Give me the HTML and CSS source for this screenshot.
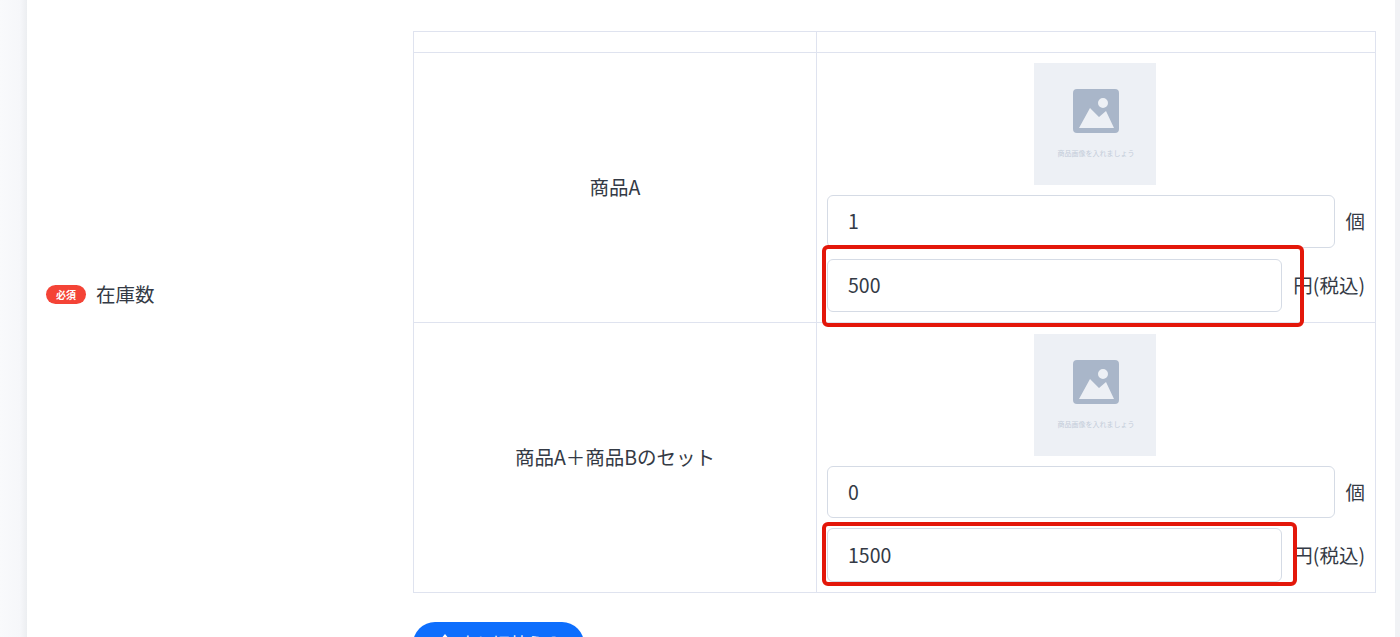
FILE: index.html
```html
<!DOCTYPE html>
<html lang="ja">
<head>
    <meta charset="UTF-8">
    <title>在庫数</title>
    <link rel="stylesheet" href="styles.css">
</head>
<body>
    <div class="card">
        <div class="form-row">
            <div class="form-label">
                <span class="badge">必須</span>
                <span>在庫数</span>
            </div>
            <div class="form-body">
                <table class="stock-table">
                    <tr class="head-row">
                        <td class="name-cell"></td>
                        <td></td>
                    </tr>
                    <tr>
                        <td class="name-cell">商品A</td>
                        <td class="input-cell">
                            <div class="thumb">
                                <svg class="thumb-icon" viewBox="0 0 46 44">
                                    <path fill="#a9b6c9" fill-rule="evenodd" d="M4 0h38a4 4 0 0 1 4 4v36a4 4 0 0 1-4 4H4a4 4 0 0 1-4-4V4a4 4 0 0 1 4-4zM25 14a5 5 0 1 0 10 0a5 5 0 1 0-10 0zM6 39h35l-8-17-7 6-9-9z"/>
                                </svg>
                                <span class="thumb-text">商品画像を入れましょう</span>
                            </div>
                            <div class="input-row">
                                <div class="input-box">1</div>
                                <span class="unit">個</span>
                            </div>
                            <div class="input-row price-row">
                                <div class="input-box price-box">500</div>
                                <span class="unit">円(税込)</span>
                                <div class="mark mark-a"></div>
                            </div>
                        </td>
                    </tr>
                    <tr>
                        <td class="name-cell">商品A＋商品Bのセット</td>
                        <td class="input-cell set-cell">
                            <div class="thumb">
                                <svg class="thumb-icon" viewBox="0 0 46 44">
                                    <path fill="#a9b6c9" fill-rule="evenodd" d="M4 0h38a4 4 0 0 1 4 4v36a4 4 0 0 1-4 4H4a4 4 0 0 1-4-4V4a4 4 0 0 1 4-4zM25 14a5 5 0 1 0 10 0a5 5 0 1 0-10 0zM6 39h35l-8-17-7 6-9-9z"/>
                                </svg>
                                <span class="thumb-text">商品画像を入れましょう</span>
                            </div>
                            <div class="input-row">
                                <div class="input-box">0</div>
                                <span class="unit">個</span>
                            </div>
                            <div class="input-row price-row">
                                <div class="input-box price-box">1500</div>
                                <span class="unit">円(税込)</span>
                                <div class="mark mark-b"></div>
                            </div>
                        </td>
                    </tr>
                </table>
                <div class="btn-row">
                    <span class="btn">
                        <svg class="btn-icon" viewBox="0 0 16 16"><path fill="#fff" d="M8 0l5 6H10v5H6V6H3zM2 13h12v3H2z"/></svg>
                        店と切替える
                    </span>
                </div>
            </div>
        </div>
    </div>
</body>
</html>
```

FILE: styles.css
```css
html, body {
    height: 637px;
    overflow: hidden;
}
body {
    margin: 0;
    padding: 0 5px 0 27px;
    background: linear-gradient(to right, #f9fafc, #f6f7fa 20px, #eceef1 27px) no-repeat;
    background-size: 27px 100%;
    background-color: #f1f2f5;
    color: #343a45;
    font-family: "Noto Sans CJK JP", "Noto Sans", sans-serif;
    font-size: 19.5px;
}
.card {
    background: white;
    height: 637px;
    padding-top: 31px;
    box-sizing: border-box;
    overflow: hidden;
}
.form-row {
    display: flex;
}
.form-label {
    width: 386px;
    height: 525px;
    padding-left: 19px;
    box-sizing: border-box;
    display: flex;
    align-items: center;
    gap: 10px;
}
.badge {
    background: #f44336;
    color: white;
    font-size: 10px;
    font-weight: bold;
    width: 40px;
    height: 19px;
    line-height: 19px;
    text-align: center;
    border-radius: 10px;
    margin-top: 2px;
}
.form-body {
    width: 963px;
}
.stock-table {
    width: 963px;
    border-collapse: collapse;
    table-layout: fixed;
}
.stock-table td {
    border: 1px solid #dfe3ef;
    padding: 0;
}
.stock-table .name-cell {
    width: 402px;
    text-align: center;
    padding-bottom: 3px;
}
.stock-table .head-row td {
    height: 20px;
    padding: 0;
}
.stock-table .input-cell {
    padding: 10px 10px 10px;
}
.stock-table .set-cell {
    padding: 11px 10px 10px;
}
.thumb {
    width: 122px;
    height: 122px;
    margin: 0 0 10px 207px;
    background: #edf0f5;
    display: flex;
    flex-direction: column;
    align-items: center;
    padding: 26px 0 0 2px;
    box-sizing: border-box;
}
.thumb-icon {
    width: 46px;
    height: 44px;
}
.thumb-text {
    margin-top: 14px;
    font-size: 7px;
    line-height: 12px;
    color: #c3ccd9;
    white-space: nowrap;
}
.input-row {
    display: flex;
    align-items: center;
    justify-content: space-between;
    position: relative;
    height: 53px;
}
.price-row {
    margin-top: 11px;
}
.set-cell .input-row {
    height: 52px;
}
.set-cell .price-row {
    height: 54px;
    margin-top: 10px;
}
.input-box {
    width: 508px;
    height: 100%;
    box-sizing: border-box;
    border: 1px solid #d5dbe5;
    border-radius: 6px;
    padding: 0 0 2px 20px;
    display: flex;
    align-items: center;
    background: white;
}
.price-box {
    width: 455px;
}
.unit {
    white-space: nowrap;
    padding-bottom: 2px;
}
.mark {
    position: absolute;
    border: 4px solid #e3170a;
    border-radius: 6px;
    box-sizing: border-box;
}
.mark-a {
    left: -5px;
    top: -14px;
    width: 482px;
    height: 82px;
}
.mark-b {
    left: -5px;
    top: -6px;
    width: 475px;
    height: 64px;
}
.btn-row {
    margin-top: 29px;
}
.btn {
    display: inline-flex;
    align-items: center;
    gap: 6px;
    height: 44px;
    width: 171px;
    justify-content: center;
    background: #0d6efd;
    color: white;
    border-radius: 22px;
    font-size: 17px;
    padding-bottom: 4px;
    box-sizing: border-box;
}
.btn-icon {
    width: 16px;
    height: 16px;
}
```
